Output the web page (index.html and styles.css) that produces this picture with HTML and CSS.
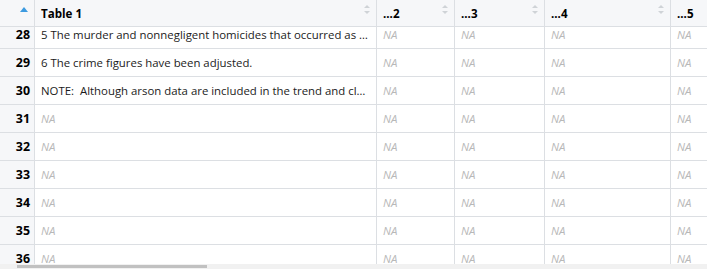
FILE: index.html
```html
<!DOCTYPE html>
<html lang="en">
<head>
<meta charset="utf-8">
<title>Table 1</title>
<link rel="stylesheet" href="styles.css">
</head>
<body>
<div class="viewer">
  <div class="grid-head">
    <div class="hcell rownum-h">
      <svg class="sort-active" width="8" height="5" viewBox="0 0 8 5"><path d="M0 5 L4 0 L8 5 Z"/></svg>
    </div>
    <div class="hcell c1"><span class="title">Table 1</span><span class="sorter"></span></div>
    <div class="hcell c2"><span class="title">...2</span><span class="sorter"></span></div>
    <div class="hcell c3"><span class="title">...3</span><span class="sorter"></span></div>
    <div class="hcell c4"><span class="title">...4</span><span class="sorter"></span></div>
    <div class="hcell c5"><span class="title">...5</span></div>
  </div>
  <div class="grid-body">
    <div class="rows">
      <div class="row"><div class="cell rownum">28</div><div class="cell c1 txt">5 The murder and nonnegligent homicides that occurred as a result of the events of September 11, 2001, are not included in this table.</div><div class="cell c2 na">NA</div><div class="cell c3 na">NA</div><div class="cell c4 na">NA</div><div class="cell c5 na">NA</div></div>
      <div class="row"><div class="cell rownum">29</div><div class="cell c1 txt">6 The crime figures have been adjusted.</div><div class="cell c2 na">NA</div><div class="cell c3 na">NA</div><div class="cell c4 na">NA</div><div class="cell c5 na">NA</div></div>
      <div class="row"><div class="cell rownum">30</div><div class="cell c1 txt">NOTE:&nbsp; Although arson data are included in the trend and clearance tables, sufficient data are not available to estimate totals for this offense.</div><div class="cell c2 na">NA</div><div class="cell c3 na">NA</div><div class="cell c4 na">NA</div><div class="cell c5 na">NA</div></div>
      <div class="row"><div class="cell rownum">31</div><div class="cell c1 na">NA</div><div class="cell c2 na">NA</div><div class="cell c3 na">NA</div><div class="cell c4 na">NA</div><div class="cell c5 na">NA</div></div>
      <div class="row"><div class="cell rownum">32</div><div class="cell c1 na">NA</div><div class="cell c2 na">NA</div><div class="cell c3 na">NA</div><div class="cell c4 na">NA</div><div class="cell c5 na">NA</div></div>
      <div class="row"><div class="cell rownum">33</div><div class="cell c1 na">NA</div><div class="cell c2 na">NA</div><div class="cell c3 na">NA</div><div class="cell c4 na">NA</div><div class="cell c5 na">NA</div></div>
      <div class="row"><div class="cell rownum">34</div><div class="cell c1 na">NA</div><div class="cell c2 na">NA</div><div class="cell c3 na">NA</div><div class="cell c4 na">NA</div><div class="cell c5 na">NA</div></div>
      <div class="row"><div class="cell rownum">35</div><div class="cell c1 na">NA</div><div class="cell c2 na">NA</div><div class="cell c3 na">NA</div><div class="cell c4 na">NA</div><div class="cell c5 na">NA</div></div>
      <div class="row"><div class="cell rownum">36</div><div class="cell c1 na">NA</div><div class="cell c2 na">NA</div><div class="cell c3 na">NA</div><div class="cell c4 na">NA</div><div class="cell c5 na">NA</div></div>
    </div>
  </div>
  <div class="hscroll"><div class="thumb"></div></div>
</div>
</body>
</html>
```
FILE: styles.css
```css
html, body {
  margin: 0;
  padding: 0;
  background: #ffffff;
}

.viewer {
  width: 707px;
  height: 269px;
  overflow: hidden;
  display: flex;
  flex-direction: column;
  font-family: "Open Sans", "Noto Sans", sans-serif;
  font-size: 11.4px;
  color: #1b1b1b;
}

/* shared column widths (each includes its right border) */
.rownum-h, .rownum { width: 35px; }
.c1 { width: 342px; }
.c2 { width: 78px; }
.c3 { width: 90px; }
.c4 { width: 126px; }
.c5 { width: 60px; }

.grid-head {
  display: flex;
  flex: none;
  height: 26px;
  background: #f6f7f9;
  border-bottom: 1px solid #dcdfe3;
}

.hcell {
  flex: none;
  box-sizing: border-box;
  height: 26px;
  border-right: 1px solid #dcdfe3;
  display: flex;
  align-items: center;
  padding-left: 6px;
  position: relative;
}

.hcell .title {
  font-weight: 700;
  font-size: 11.6px;
  color: #000;
  white-space: nowrap;
}

.rownum-h {
  justify-content: flex-end;
  align-items: flex-start;
  padding: 7px 6px 0 0;
}

.sort-active {
  fill: #3d9be0;
}

/* faint up/down sort indicator at the right of each header */
.sorter {
  position: absolute;
  right: 6px;
  top: 5px;
  width: 6px;
  height: 9px;
}
.sorter::before,
.sorter::after {
  content: "";
  position: absolute;
  left: 0;
  border-left: 3px solid transparent;
  border-right: 3px solid transparent;
}
.sorter::before {
  top: 0;
  border-bottom: 3px solid #cfd3d7;
}
.sorter::after {
  bottom: 0;
  border-top: 3px solid #cfd3d7;
}

.grid-body {
  flex: 1;
  overflow: hidden;
  position: relative;
}

.rows {
  margin-top: -6px;
}

.row {
  display: flex;
  height: 28px;
  box-sizing: border-box;
  border-bottom: 1px solid #dcdfe3;
}

.cell {
  flex: none;
  box-sizing: border-box;
  height: 27px;
  border-right: 1px solid #dcdfe3;
  padding: 0 6px;
  line-height: 27px;
  white-space: nowrap;
  overflow: hidden;
  text-overflow: ellipsis;
}

.rownum {
  background: #f6f7f9;
  text-align: right;
  font-weight: 700;
  color: #000;
  padding-right: 4px;
  font-size: 12.4px;
}

.na {
  font-style: italic;
  color: #b8b8b8;
}

.hscroll {
  flex: none;
  height: 5px;
  background: #f1f1f1;
  position: relative;
}

.thumb {
  position: absolute;
  left: 17px;
  top: 1px;
  width: 190px;
  height: 3px;
  background: #c1c1c1;
}
```
